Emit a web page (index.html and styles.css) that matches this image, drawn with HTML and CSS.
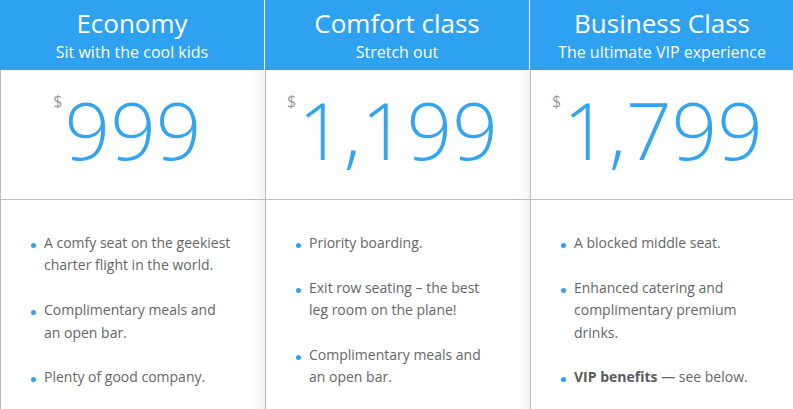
FILE: index.html
```html
<!DOCTYPE html>
<html lang="en">
<head>
<meta charset="utf-8">
<title>Plans</title>
<link rel="stylesheet" href="styles.css">
</head>
<body>
<div class="plans">
  <section class="plan">
    <header class="plan-head">
      <h2 class="plan-title">Economy</h2>
      <p class="plan-tag">Sit with the cool kids</p>
    </header>
    <div class="plan-body shaded">
      <div class="price"><span class="cur">$</span><span class="amount">999</span></div>
      <ul class="features">
        <li><span>A comfy seat on the geekiest charter flight in the world.</span></li>
        <li><span>Complimentary meals and an open bar.</span></li>
        <li><span>Plenty of good company.</span></li>
      </ul>
    </div>
  </section>
  <section class="plan">
    <header class="plan-head">
      <h2 class="plan-title">Comfort class</h2>
      <p class="plan-tag">Stretch out</p>
    </header>
    <div class="plan-body shaded">
      <div class="price"><span class="cur">$</span><span class="amount">1,199</span></div>
      <ul class="features">
        <li><span>Priority boarding.</span></li>
        <li><span>Exit row seating – the best leg room on the plane!</span></li>
        <li><span>Complimentary meals and an open bar.</span></li>
      </ul>
    </div>
  </section>
  <section class="plan">
    <header class="plan-head">
      <h2 class="plan-title">Business Class</h2>
      <p class="plan-tag">The ultimate VIP experience</p>
    </header>
    <div class="plan-body">
      <div class="price"><span class="cur">$</span><span class="amount">1,799</span></div>
      <ul class="features">
        <li><span>A blocked middle seat.</span></li>
        <li><span>Enhanced catering and complimentary premium drinks.</span></li>
        <li><span><strong>VIP benefits</strong> — see below.</span></li>
      </ul>
    </div>
  </section>
</div>
</body>
</html>
```
FILE: styles.css
```css
html, body {
  margin: 0;
  padding: 0;
  overflow: hidden;
  background: #fff;
}
body {
  font-family: "Open Sans", "Liberation Sans", sans-serif;
  color: #666;
}
.plans {
  display: flex;
  width: 795px;
}
.plan {
  width: 265px;
  flex: none;
}
.plan-head {
  background: #2ea1f0;
  color: #fff;
  text-align: center;
  height: 70px;
  box-sizing: border-box;
  padding-top: 7px;
  margin-right: 1px;
}
.plan-title {
  margin: 0;
  font-size: 26px;
  font-weight: 400;
  line-height: 32px;
}
.plan-tag {
  margin: 2px 0 0;
  font-size: 16px;
  line-height: 22px;
}
.plan-body {
  border-left: 1px solid #bdbdbd;
  height: 339px;
}
.plan-body.shaded {
  box-shadow: inset -14px 0 12px -10px rgba(0, 0, 0, 0.07);
}
.price {
  text-align: center;
  padding: 19px 0 30px;
  border-bottom: 1px solid #bdbdbd;
  line-height: 80px;
  height: 80px;
}
.cur {
  display: inline-block;
  box-sizing: border-box;
  width: 14px;
  margin-left: -14px;
  padding-right: 2px;
  text-align: right;
  vertical-align: top;
  margin-top: 4px;
  font-size: 16px;
  line-height: 16px;
  color: #9a9a9a;
}
.amount {
  font-size: 80px;
  font-weight: 300;
  color: #33a4f0;
}
.features {
  list-style: none;
  margin: 0;
  padding: 32px 33px 0 30px;
  font-size: 14px;
  line-height: 22.4px;
}
.features li {
  display: flex;
  gap: 8px;
  margin-bottom: 22.4px;
}
.features li::before {
  content: "";
  flex: none;
  width: 5px;
  height: 5px;
  border-radius: 50%;
  background: #2ea1f0;
  margin-top: 11px;
}
.features strong {
  font-weight: 700;
  color: #5a5a5a;
}
```
